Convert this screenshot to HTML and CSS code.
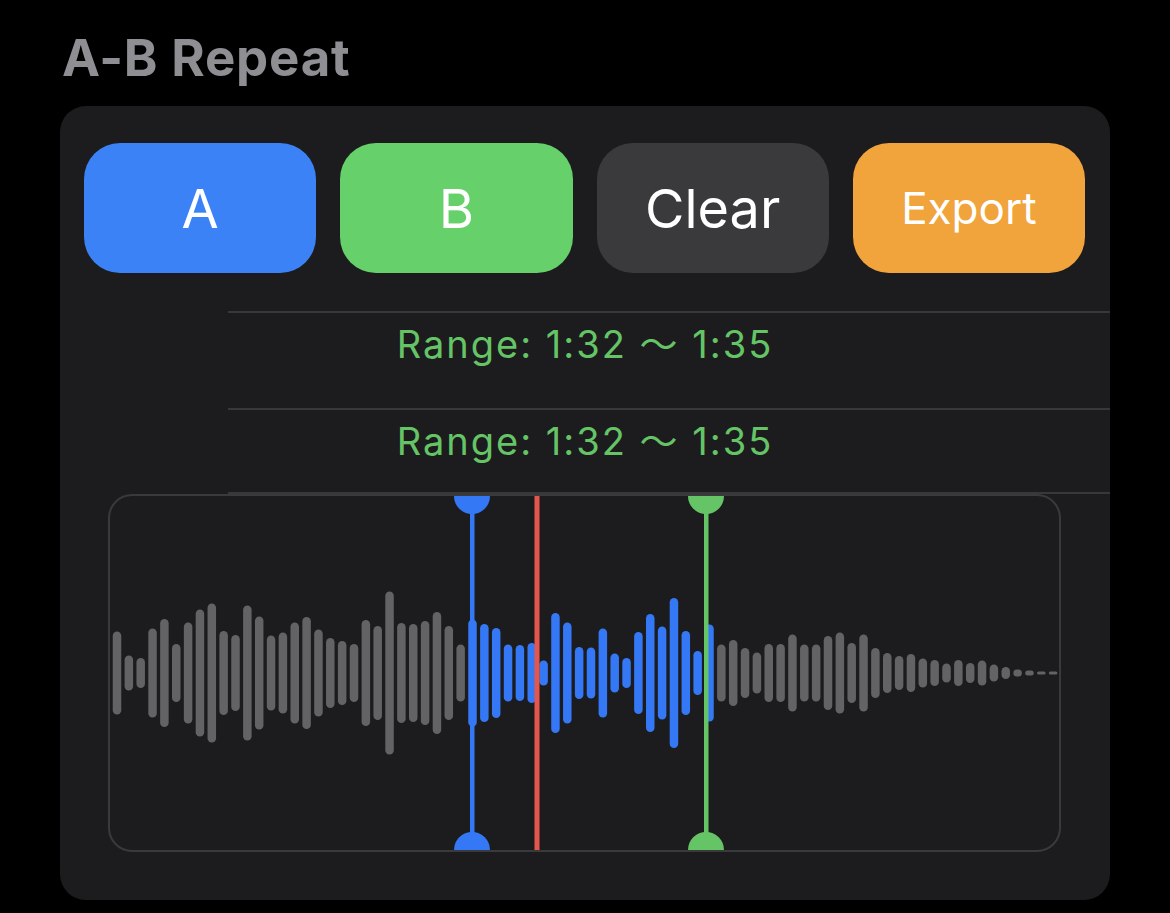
FILE: index.html
```html
<!DOCTYPE html>
<html lang="en">
<head>
    <meta charset="UTF-8">
    <meta name="viewport" content="width=device-width, initial-scale=1.0">
    <title>A-B Repeat</title>
    <link rel="stylesheet" href="styles.css">
</head>
<body>

<h1 class="title">A-B Repeat</h1>

<section class="card">
    <div class="buttons">
        <button class="btn btn-a">A</button>
        <button class="btn btn-b">B</button>
        <button class="btn btn-clear">Clear</button>
        <button class="btn btn-export">Export</button>
    </div>

    <div class="ranges">
        <div class="range-row first">Range: 1:32 〜 1:35</div>
        <div class="range-row second">Range: 1:32 〜 1:35</div>
    </div>

    <div class="wave">
        <svg id="waveform" viewBox="0 0 949 354" width="100%" height="100%">
            <g id="bars"></g>
            <!-- marker A -->
            <rect x="360" y="0" width="4.5" height="354" fill="#3478f6"/>
            <path d="M344,0 A18,18 0 0 0 380,0 Z" fill="#3478f6"/>
            <path d="M344,354 A18,18 0 0 1 380,354 Z" fill="#3478f6"/>
            <!-- playhead -->
            <rect x="424.5" y="0" width="5" height="354" fill="#e5564d"/>
            <!-- marker B -->
            <rect x="594" y="0" width="4.5" height="354" fill="#65c466"/>
            <path d="M578,0 A18,18 0 0 0 614,0 Z" fill="#65c466"/>
            <path d="M578,354 A18,18 0 0 1 614,354 Z" fill="#65c466"/>
        </svg>
    </div>
</section>

<script>
    // alturas das barras da forma de onda
    var heights = [83,35,30,89,108,58,101,127,139,84,76,135,113,75,81,101,112,87,70,64,58,106,94,163,100,98,104,122,94,57,
        107,98,90,57,56,60,25,120,101,52,51,89,39,30,82,118,93,150,84,44,97,
        57,66,50,41,58,58,77,57,57,74,81,60,77,50,40,34,38,29,26,19,26,20,25,17,12,7,5,3,3];

    var group = document.getElementById('bars');
    var ns = 'http://www.w3.org/2000/svg';
    var mid = 177;

    for (var i = 0; i < heights.length; i++) {
        var h = heights[i];
        var bar = document.createElementNS(ns, 'rect');
        bar.setAttribute('x', (7 + i * 11.85 - 4.25).toFixed(2));
        bar.setAttribute('y', (mid - h / 2).toFixed(2));
        bar.setAttribute('width', 8.5);
        bar.setAttribute('height', h);
        bar.setAttribute('rx', Math.min(4.25, h / 2));
        bar.setAttribute('fill', (i >= 30 && i <= 50) ? '#3478f6' : '#636366');
        group.appendChild(bar);
    }
</script>

</body>
</html>
```

FILE: styles.css
```css
body {
    font-family: Inter, "Noto Sans", sans-serif;
    background-color: #000;
    margin: 0;
    padding: 0;
}

.title {
    margin: 0;
    padding: 28px 62px 0;
    font-size: 51px;
    line-height: 60px;
    font-weight: 700;
    letter-spacing: 0.8px;
    color: #8e8e93;
}

.card {
    width: 1050px;
    margin: 18px 0 0 60px;
    padding: 37px 0 48px;
    box-sizing: border-box;
    background-color: #1c1c1e;
    border-radius: 26px;
}

.buttons {
    display: flex;
    gap: 24px;
    padding: 0 25px 0 24px;
}

.btn {
    flex: 1;
    height: 130px;
    border: none;
    border-radius: 36px;
    color: #fff;
    font-family: Inter, "Noto Sans", sans-serif;
    font-size: 54px;
    font-weight: 400;
    display: flex;
    align-items: center;
    justify-content: center;
    padding: 0;
}

.btn-a {
    background-color: #3b82f7;
}

.btn-b {
    background-color: #66d06a;
}

.btn-clear {
    background-color: #3a3a3c;
}

.btn-export {
    background-color: #f1a33c;
    font-size: 44px;
}

.ranges {
    margin-top: 38px;
}

.range-row {
    margin-left: 168px;
    padding-right: 168px;
    box-sizing: border-box;
    border-top: 2px solid #38383a;
    text-align: center;
    color: #65c466;
    font-family: Inter, "Noto Sans", "Noto Sans CJK JP", sans-serif;
    font-size: 38px;
    letter-spacing: 2px;
    line-height: 44px;
    padding-top: 9px;
}

.range-row.first {
    height: 97px;
}

.range-row.second {
    height: 86px;
    border-bottom: 2px solid #38383a;
}

.wave {
    height: 358px;
    margin: 0 49px 0 48px;
    box-sizing: border-box;
    border: 2px solid #3a3a3c;
    border-radius: 24px;
}

#waveform {
    display: block;
}
```
